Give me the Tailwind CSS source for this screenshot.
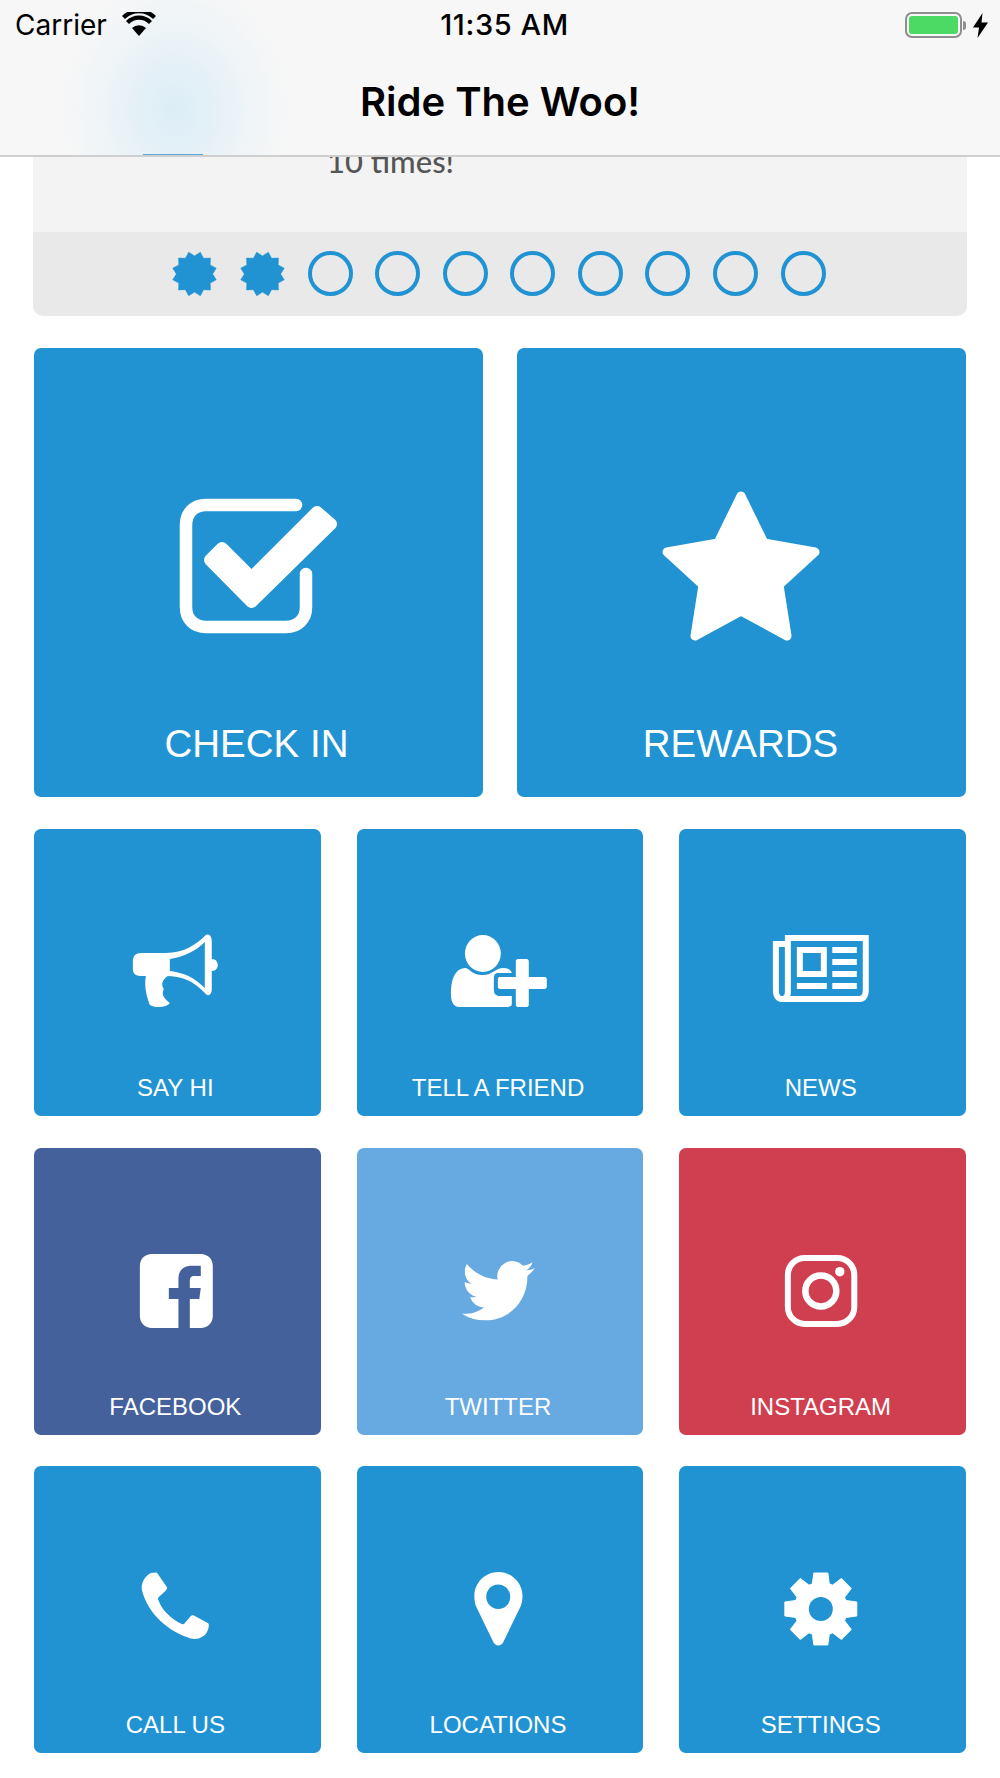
<!DOCTYPE html>
<html lang="en">
<head>
<meta charset="utf-8">
<title>Ride The Woo!</title>
<script src="https://cdn.jsdelivr.net/npm/@tailwindcss/browser@4"></script>
</head>
<body class="bg-white font-['Liberation_Sans',sans-serif] overflow-hidden">
<div class="w-[1000px] h-[1778px] overflow-hidden">
  <header class="relative h-[157px] bg-[#f7f7f7] border-b-2 border-[#cfcfcf] font-['Inter',sans-serif] text-black overflow-hidden">
    <div class="absolute inset-0 bg-[radial-gradient(ellipse_115px_135px_at_175px_110px,#dcedf7_0%,#e3f0f7_30%,#eff4f7_65%,#f7f7f7_100%)]"></div>
    <div class="absolute left-[143px] top-[154px] w-[60px] h-[1px] bg-[#5aa9d9]"></div>
    <div class="relative grid grid-cols-[1fr_auto_1fr] items-center h-[50px] pl-[15px] pr-[12px] text-[28px]">
      <div class="flex items-center gap-[15px]">
        <span>Carrier</span>
        <svg class="w-[34px] h-[24px] -mt-[2px]" viewBox="0 0 34 24" fill="none" stroke="#000">
          <path d="M17 24 L10 16 A10 10 0 0 1 24 16 Z" fill="#000" stroke="none"/>
          <path d="M5.5 10.5 A16 16 0 0 1 28.5 10.5" stroke-width="4.2"/>
          <path d="M1.5 5.5 A22 22 0 0 1 32.5 5.5" stroke-width="4.2"/>
        </svg>
      </div>
      <div class="font-medium text-[29px] tracking-[0.6px] ml-[6px]">11:35 AM</div>
      <div class="flex items-center justify-end gap-[7px]">
        <div class="flex items-center">
          <div class="w-[57px] h-[26px] rounded-[7px] border-2 border-[#8e8e8e] p-[2px]">
            <div class="w-full h-full rounded-[3px] bg-[#4cd964]"></div>
          </div>
          <div class="w-[3px] h-[9px] rounded-r-full bg-[#8e8e8e] ml-[1px]"></div>
        </div>
        <svg class="w-[15px] h-[25px]" viewBox="0 0 15 25" fill="#000"><path d="M9.5 0 L0 14.5 H6 L4.5 25 L15 9.5 H8.5 Z"/></svg>
      </div>
    </div>
    <h1 class="relative text-center text-[40px] font-semibold leading-[50px] mt-[27px]">Ride The Woo!</h1>
  </header>

  <main class="px-[34px]">
    <section class="-mx-px rounded-b-[10px] overflow-hidden">
      <div class="h-[75px] bg-[#f3f3f3] overflow-hidden pl-[294px]">
        <p class="-mt-[16px] text-[31px] leading-[40px] text-[#555] font-['Lato',sans-serif] font-medium">10 times!</p>
      </div>
      <div class="h-[84px] bg-[#e9e9e9] flex items-center justify-center gap-[22.6px] pr-[2px] pb-[1px]">
        <svg class="w-[45px] h-[46px]" viewBox="0 0 46 46" fill="#2193d2" stroke="#2193d2" stroke-width="0.6" stroke-linejoin="round"><polygon points="23,4.5 28.95,0.8 32.25,6.98 39.26,6.74 39.02,13.75 45.2,17.05 41.5,23 45.2,28.95 39.02,32.25 39.26,39.26 32.25,39.02 28.95,45.2 23,41.5 17.05,45.2 13.75,39.02 6.74,39.26 6.98,32.25 0.8,28.95 4.5,23 0.8,17.05 6.98,13.75 6.74,6.74 13.75,6.98 17.05,0.8"/></svg>
        <svg class="w-[45px] h-[46px]" viewBox="0 0 46 46" fill="#2193d2" stroke="#2193d2" stroke-width="0.6" stroke-linejoin="round"><polygon points="23,4.5 28.95,0.8 32.25,6.98 39.26,6.74 39.02,13.75 45.2,17.05 41.5,23 45.2,28.95 39.02,32.25 39.26,39.26 32.25,39.02 28.95,45.2 23,41.5 17.05,45.2 13.75,39.02 6.74,39.26 6.98,32.25 0.8,28.95 4.5,23 0.8,17.05 6.98,13.75 6.74,6.74 13.75,6.98 17.05,0.8"/></svg>
        <div class="w-[45px] h-[45px] rounded-full border-4 border-[#2193d2]"></div>
        <div class="w-[45px] h-[45px] rounded-full border-4 border-[#2193d2]"></div>
        <div class="w-[45px] h-[45px] rounded-full border-4 border-[#2193d2]"></div>
        <div class="w-[45px] h-[45px] rounded-full border-4 border-[#2193d2]"></div>
        <div class="w-[45px] h-[45px] rounded-full border-4 border-[#2193d2]"></div>
        <div class="w-[45px] h-[45px] rounded-full border-4 border-[#2193d2]"></div>
        <div class="w-[45px] h-[45px] rounded-full border-4 border-[#2193d2]"></div>
        <div class="w-[45px] h-[45px] rounded-full border-4 border-[#2193d2]"></div>
      </div>
    </section>

    <section class="grid grid-cols-2 gap-[34px] mt-[32px]">
      <a class="h-[449px] rounded-[7px] bg-[#2193d2] text-white text-center flex flex-col">
        <svg class="w-full h-[360px] shrink-0" viewBox="0 0 449 360" fill="#fff">
          <path d="M262 157 H172 C160 157 152 165 152 177 V259 C152 271 160 279 172 279 H252 C264 279 272 271 272 259 V226" fill="none" stroke="#fff" stroke-width="12.5" stroke-linecap="round"/>
          <path d="M283 164 L297 176 L217.6 254 L176 212 L188 200 L217.6 229.5 Z" stroke="#fff" stroke-width="12" stroke-linejoin="round"/>
        </svg>
        <span class="h-[70px] leading-[72px] text-[38.5px] pr-[4px]">CHECK IN</span>
      </a>
      <a class="h-[449px] rounded-[7px] bg-[#2193d2] text-white text-center flex flex-col">
        <svg class="w-full h-[360px] shrink-0" viewBox="0 0 449 360" fill="#fff">
          <polygon points="224,148 247,195 298,204 262,237 270,288 224,263 178,288 186,237 150,204 201,195" stroke="#fff" stroke-width="9" stroke-linejoin="round"/>
        </svg>
        <span class="h-[70px] leading-[72px] text-[38.5px] pr-[2px]">REWARDS</span>
      </a>
    </section>

    <section class="grid grid-cols-3 gap-x-9 gap-y-[31.5px] mt-[32px]">
      <a class="h-[287px] rounded-[7px] bg-[#2193d2] text-white text-center flex flex-col">
        <svg class="w-full h-[230px] shrink-0" viewBox="0 0 287 230" fill="#fff">
          <path fill-rule="evenodd" d="M107 124 H132 C150 124 162 116 172 106 C176 104 178 108 178 113 V130 C182 130 184 133 184 136 C184 139 182 142 178 142 V160 C178 165 175 168 172 165 C160 152 148 147 132 147 H107 C101 147 99 144 99 140 V132 C99 127 102 124 107 124 Z M136 130 C150 128 162 122 171 113 V159 C160 148 150 144 136 142 Z"/>
          <path d="M112 147 C110 158 113 168 116 176 C120 179 133 179 136 174 C131 170 127 166 130 160 C127 156 128 151 134 147 Z"/>
        </svg>
        <span class="h-[57px] leading-[58px] text-[24px] pr-[4px]">SAY HI</span>
      </a>
      <a class="h-[287px] rounded-[7px] bg-[#2193d2] text-white text-center flex flex-col">
        <svg class="w-full h-[230px] shrink-0" viewBox="0 0 287 230" fill="#fff">
          <ellipse cx="126" cy="124.5" rx="18" ry="18.5"/>
          <path d="M94 165 C94 150 98 140 108 139 C113 139 114 146 126 146 C136 146 138 139 147 139 C151 139 154 141 155 144 H142 C138 144 137 146 137 150 V160 C137 165 139 167 143 167 H155 V175 C155 177 153 178 150 178 H102 C97 178 94 173 94 165 Z"/>
          <path d="M159 132 C159 131 160 130 161 130 H170 C171 130 172 131 172 132 V148 H188 C189 148 190 149 190 150 V158 C190 159 189 160 188 160 H172 V176 C172 177 171 178 170 178 H161 C160 178 159 177 159 176 V160 H143 C142 160 141 159 141 158 V150 C141 149 142 148 143 148 H159 Z"/>
        </svg>
        <span class="h-[57px] leading-[58px] text-[24px] pr-[4px]">TELL A FRIEND</span>
      </a>
      <a class="h-[287px] rounded-[7px] bg-[#2193d2] text-white text-center flex flex-col">
        <svg class="w-full h-[230px] shrink-0" viewBox="0 0 287 230" fill="#fff">
          <path fill-rule="evenodd" d="M106 106 H190 V161 C190 168 187 173 181 173 H103 C97 173 94 168 94 161 V112 H106 Z M112 112 V163 C112 165 112 166 111 167 H180 C183 167 184 165 184 161 V112 Z M100 118 V162 C100 165 101 167 103 167 C105 167 106 166 106 162 V118 Z"/>
          <path fill-rule="evenodd" d="M118 118 H148 V148 H118 Z M124 124 V142 H142 V124 Z"/>
          <path d="M153.5 118 H178 V124 H153.5 Z M153.5 130 H178 V136 H153.5 Z M153.5 142 H178 V148 H153.5 Z M153.5 154 H178 V160 H153.5 Z M118 154 H148 V160 H118 Z"/>
        </svg>
        <span class="h-[57px] leading-[58px] text-[24px] pr-[4px]">NEWS</span>
      </a>

      <a class="h-[287px] rounded-[7px] bg-[#44619b] text-white text-center flex flex-col">
        <svg class="w-full h-[230px] shrink-0" viewBox="0 0 287 230" fill="#fff">
          <path fill-rule="evenodd" d="M118 106 H167 C174 106 179 111 179 118 V168 C179 175 174 180 167 180 H156 V151 H165.5 L167 140 H156 V133 C156 130 157 128 161 128 H167 V117.7 H158 C150 117.7 144.6 122 144.6 131 V140 H135 V151 H144.6 V180 H118 C111 180 106 175 106 168 V118 C106 111 111 106 118 106 Z"/>
        </svg>
        <span class="h-[57px] leading-[58px] text-[24px] pr-[4px]">FACEBOOK</span>
      </a>
      <a class="h-[287px] rounded-[7px] bg-[#67a9e1] text-white text-center flex flex-col">
        <svg class="w-full h-[230px] shrink-0" viewBox="0 0 287 230" fill="#fff">
          <g transform="translate(105 106.3) scale(3.04)"><path d="M23.953 4.57a10 10 0 01-2.825.775 4.958 4.958 0 002.163-2.723c-.951.555-2.005.959-3.127 1.184a4.92 4.92 0 00-8.384 4.482C7.69 8.095 4.067 6.13 1.64 3.162a4.822 4.822 0 00-.666 2.475c0 1.71.87 3.213 2.188 4.096a4.904 4.904 0 01-2.228-.616v.06a4.923 4.923 0 003.946 4.827 4.996 4.996 0 01-2.212.085 4.936 4.936 0 004.604 3.417 9.867 9.867 0 01-6.102 2.105c-.39 0-.779-.023-1.17-.067a13.995 13.995 0 007.557 2.209c9.053 0 13.998-7.496 13.998-13.985 0-.21 0-.42-.015-.63A9.935 9.935 0 0024 4.59z"/></g>
        </svg>
        <span class="h-[57px] leading-[58px] text-[24px] pr-[4px]">TWITTER</span>
      </a>
      <a class="h-[287px] rounded-[7px] bg-[#d03f4f] text-white text-center flex flex-col">
        <svg class="w-full h-[230px] shrink-0" viewBox="0 0 287 230" fill="none" stroke="#fff">
          <rect x="109" y="110" width="66.5" height="66" rx="17" stroke-width="6"/>
          <circle cx="142" cy="143" r="15.5" stroke-width="6.5"/>
          <circle cx="161" cy="123.7" r="4.7" fill="#fff" stroke="none"/>
        </svg>
        <span class="h-[57px] leading-[58px] text-[24px] pr-[4px]">INSTAGRAM</span>
      </a>

      <a class="h-[287px] rounded-[7px] bg-[#2193d2] text-white text-center flex flex-col">
        <svg class="w-full h-[230px] shrink-0" viewBox="0 0 287 230" fill="#fff">
          <path d="M117 107 L122 106.5 C123 106.5 123.5 107 124 108 L133 121 C133.5 122 133 123 132.5 124 L125 131 C124 132 124 133 124.5 134 C128 144 137 153 148 158 C149.5 158.5 150.5 158 151 157 L157 150 C158 149 159 149 160 149.5 L174 157 C175 157.5 175 158.5 175 160 C174.5 165 172 169 169 170.5 C165 173 161 173.5 157 172.5 C135 166 114 148 108 124 C107 117 111 110 117 107 Z"/>
        </svg>
        <span class="h-[57px] leading-[58px] text-[24px] pr-[4px]">CALL US</span>
      </a>
      <a class="h-[287px] rounded-[7px] bg-[#2193d2] text-white text-center flex flex-col">
        <svg class="w-full h-[230px] shrink-0" viewBox="0 0 287 230" fill="#fff">
          <path fill-rule="evenodd" d="M141.6 106 C155 106 165.7 117 165.7 130 C165.7 134 165 137 164 140 L147 175 C145 181 138 181 136 175 L119 140 C118 137 117.5 134 117.5 130 C117.5 117 128 106 141.6 106 Z M141.4 118.5 C134.5 118.5 129.4 124 129.4 130.8 C129.4 137.5 134.5 143 141.4 143 C148.2 143 153.4 137.5 153.4 130.8 C153.4 124 148.2 118.5 141.4 118.5 Z"/>
        </svg>
        <span class="h-[57px] leading-[58px] text-[24px] pr-[4px]">LOCATIONS</span>
      </a>
      <a class="h-[287px] rounded-[7px] bg-[#2193d2] text-white text-center flex flex-col">
        <svg class="w-full h-[230px] shrink-0" viewBox="0 0 287 230" fill="#fff">
          <circle cx="142" cy="143" r="27"/>
          <path d="M135 107 H149 L151 122 H133 Z" stroke="#fff" stroke-linejoin="round"/>
          <path transform="rotate(45 142 143)" d="M135 107 H149 L151 122 H133 Z" stroke="#fff" stroke-linejoin="round"/>
          <path transform="rotate(90 142 143)" d="M135 107 H149 L151 122 H133 Z" stroke="#fff" stroke-linejoin="round"/>
          <path transform="rotate(135 142 143)" d="M135 107 H149 L151 122 H133 Z" stroke="#fff" stroke-linejoin="round"/>
          <path transform="rotate(180 142 143)" d="M135 107 H149 L151 122 H133 Z" stroke="#fff" stroke-linejoin="round"/>
          <path transform="rotate(225 142 143)" d="M135 107 H149 L151 122 H133 Z" stroke="#fff" stroke-linejoin="round"/>
          <path transform="rotate(270 142 143)" d="M135 107 H149 L151 122 H133 Z" stroke="#fff" stroke-linejoin="round"/>
          <path transform="rotate(315 142 143)" d="M135 107 H149 L151 122 H133 Z" stroke="#fff" stroke-linejoin="round"/>
          <circle cx="142" cy="143" r="12" fill="#2193d2"/>
        </svg>
        <span class="h-[57px] leading-[58px] text-[24px] pr-[4px]">SETTINGS</span>
      </a>
    </section>
  </main>
</div>
</body>
</html>
